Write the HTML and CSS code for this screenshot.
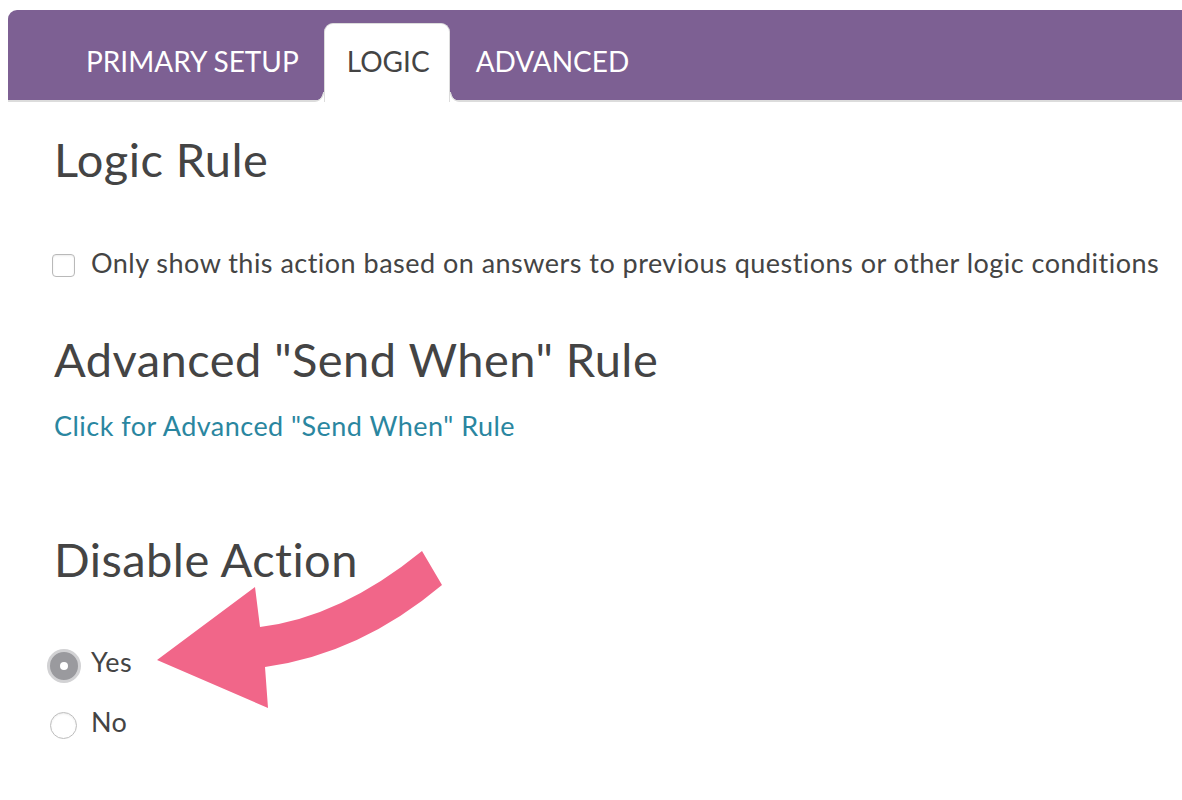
FILE: index.html
```html
<!DOCTYPE html>
<html lang="en">
<head>
<meta charset="utf-8">
<title>Logic</title>
<link rel="stylesheet" href="styles.css">
</head>
<body>
<div class="window">
  <nav class="tabbar">
    <div class="tab tab-primary">PRIMARY SETUP</div>
    <div class="tab active">LOGIC</div>
    <div class="tab tab-advanced">ADVANCED</div>
  </nav>
  <main class="content">
    <h2 class="heading h-logic">Logic Rule</h2>
    <label class="check-row">
      <span class="checkbox"></span>
      <span class="check-label">Only show this action based on answers to previous questions or other logic conditions</span>
    </label>
    <h2 class="heading h-adv">Advanced "Send When" Rule</h2>
    <a class="link">Click for Advanced "Send When" Rule</a>
    <h2 class="heading h-disable">Disable Action</h2>
    <div class="radio-row yes">
      <span class="radio selected"><span class="dot"></span></span>
      <span class="radio-label">Yes</span>
    </div>
    <div class="radio-row no">
      <span class="radio"></span>
      <span class="radio-label">No</span>
    </div>
  </main>
  <svg class="arrow" width="1182" height="800" viewBox="0 0 1182 800">
    <path d="M422 551 Q341 617 260 627 L255 587 L157 660 L268 708 L265 667 Q360 654 442 585 Z" fill="#f16689"/>
  </svg>
</div>
</body>
</html>
```

FILE: styles.css
```css
* { box-sizing: border-box; }
html, body { margin: 0; padding: 0; background: #fff; }
body {
  font-family: Lato, "Open Sans", sans-serif;
  color: #444;
  width: 1182px;
  height: 800px;
  overflow: hidden;
}
.window {
  position: relative;
  padding: 10px 0 0 8px;
  height: 800px;
}
.tabbar {
  display: flex;
  align-items: flex-end;
  height: 90px;
  padding-left: 55px;
  background: #7d6093;
  border-top-left-radius: 9px;
  box-shadow: 0 2px 0 #dcdcdc;
}
.tab {
  position: relative;
  height: 77px;
  padding: 21px 22px 0;
  font-size: 28px;
  line-height: 34px;
  color: #fff;
}
.tab-primary { padding-left: 23px; padding-right: 25px; }
.tab-advanced { padding-left: 26px; }
.tab.active {
  background: #fff;
  color: #444;
  border: 1px solid #dcdcdc;
  border-bottom: none;
  border-radius: 9px 9px 0 0;
  height: 79px;
  margin-bottom: -2px;
  padding: 20px 19px 0 22px;
}
.tab.active::before,
.tab.active::after {
  content: "";
  position: absolute;
  bottom: 0;
  width: 10px;
  height: 10px;
}
.tab.active::before {
  left: -11px;
  background: radial-gradient(circle at 0 0, transparent 8.5px, #dcdcdc 9px, #dcdcdc 9.5px, #fff 10.5px);
}
.tab.active::after {
  right: -11px;
  background: radial-gradient(circle at 100% 0, transparent 8.5px, #dcdcdc 9px, #dcdcdc 9.5px, #fff 10.5px);
}
.content {
  padding-left: 46px;
  display: flex;
  flex-direction: column;
  align-items: flex-start;
}
.heading {
  margin: 0;
  font-size: 47px;
  line-height: 56px;
  font-weight: 400;
  letter-spacing: 0.45px;
  color: #444;
}
.h-logic { margin-top: 31px; }
.check-row {
  margin-top: 60px;
  display: flex;
  align-items: center;
  gap: 16px;
  font-size: 27px;
  line-height: 32px;
  letter-spacing: 0.48px;
  margin-left: -2px;
}
.checkbox {
  flex-shrink: 0;
  width: 23px;
  height: 23px;
  border: 1px solid #b9b9b9;
  border-radius: 4px;
  background: #fff;
  box-shadow: inset 0 1px 2px rgba(0,0,0,0.08);
  margin-top: 4px;
}
.h-adv { margin-top: 52px; }
.link {
  margin-top: 23px;
  font-size: 27px;
  line-height: 32px;
  letter-spacing: 0.47px;
  color: #2a86a0;
  cursor: pointer;
}
.h-disable { margin-top: 89px; }
.radio-row {
  display: flex;
  align-items: flex-start;
  height: 32px;
  font-size: 27px;
  line-height: 32px;
  letter-spacing: 0.4px;
}
.radio-row.yes { margin-top: 59px; margin-left: -7px; gap: 10px; }
.radio-row.no { margin-top: 28px; margin-left: -4px; gap: 14px; }
.radio {
  flex-shrink: 0;
  width: 27px;
  height: 27px;
  border-radius: 50%;
  border: 1px solid #bdbdbd;
  background: #fff;
  box-shadow: inset 0 1px 2px rgba(0,0,0,0.08);
  margin-top: 6px;
}
.radio.selected {
  width: 34px;
  height: 34px;
  border: 3px solid #d2d2d4;
  background: #9a9a9e;
  box-shadow: none;
  display: flex;
  align-items: center;
  justify-content: center;
  margin-top: 3px;
}
.dot {
  width: 8px;
  height: 8px;
  border-radius: 50%;
  background: #fff;
}
.arrow {
  position: absolute;
  left: 0;
  top: 0;
  pointer-events: none;
}
```
